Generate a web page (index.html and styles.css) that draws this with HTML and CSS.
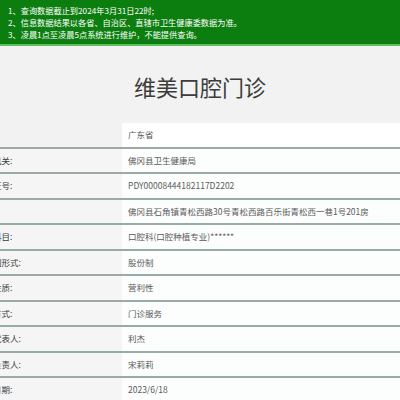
FILE: index.html
```html
<!DOCTYPE html>
<html lang="zh-CN">
<head>
<meta charset="utf-8">
<title>维美口腔门诊</title>
<link rel="stylesheet" href="styles.css">
</head>
<body>
<div class="notice">
  <p>1、查询数据截止到2024年3月31日22时;</p>
  <p>2、信息数据结果以各省、自治区、直辖市卫生健康委数据为准。</p>
  <p>3、凌晨1点至凌晨5点系统进行维护，不能提供查询。</p>
</div>
<div class="title-bar">
  <h1 class="title">维美口腔门诊</h1>
</div>
<div class="info">
  <div class="row"><div class="label">省份:</div><div class="value">广东省</div></div>
  <div class="row"><div class="label">发证机关:</div><div class="value">佛冈县卫生健康局</div></div>
  <div class="row"><div class="label">登记证号:</div><div class="value">PDY00008444182117D2202</div></div>
  <div class="row"><div class="label">地址:</div><div class="value">佛冈县石角镇青松西路30号青松西路百乐街青松西一巷1号201房</div></div>
  <div class="row"><div class="label">诊疗科目:</div><div class="value">口腔科(口腔种植专业)******</div></div>
  <div class="row"><div class="label">所有制形式:</div><div class="value">股份制</div></div>
  <div class="row"><div class="label">经营性质:</div><div class="value">营利性</div></div>
  <div class="row"><div class="label">服务方式:</div><div class="value">门诊服务</div></div>
  <div class="row"><div class="label">法定代表人:</div><div class="value">利杰</div></div>
  <div class="row"><div class="label">主要负责人:</div><div class="value">宋莉莉</div></div>
  <div class="row"><div class="label">发证日期:</div><div class="value">2023/6/18</div></div>
</div>
</body>
</html>
```
FILE: styles.css
```css
html, body {
  margin: 0;
  padding: 0;
}
body {
  background: #f2f2f2;
  font-family: "Noto Sans CJK SC", "Noto Sans", sans-serif;
  overflow: hidden;
}
.notice {
  background: #0c7e0f;
  border-bottom: 2px solid #5fbf5c;
  color: #ffffff;
  font-size: 8.2px;
  line-height: 12px;
  padding: 4px 8px 4px;
}
.notice p {
  margin: 0;
}
.title-bar {
  padding: 25px 0 22px;
  border-bottom: 1px solid #ebebeb;
}
.title {
  margin: 0;
  text-align: center;
  font-size: 22px;
  line-height: 30px;
  font-weight: 400;
  color: #3c3c3c;
}
.info {
  margin-left: -38px;
  margin-top: -1px;
}
.row {
  display: grid;
  grid-template-columns: 160px 1fr;
  height: 23.56px;
  border-bottom: 2px solid #98aca5;
}
.label {
  background: #f5f5f5;
  color: #3a3a3a;
  font-size: 8.5px;
  line-height: 23.56px;
  padding-left: 14px;
  white-space: nowrap;
  overflow: hidden;
}
.value {
  background: #fcfefd;
  color: #5a5a5a;
  font-size: 8.5px;
  line-height: 23.56px;
  padding-left: 6px;
  white-space: nowrap;
  overflow: hidden;
}
.row:first-child .label {
  background: #f2f2f2;
}
.row:first-child .value {
  background: #ffffff;
}
```
